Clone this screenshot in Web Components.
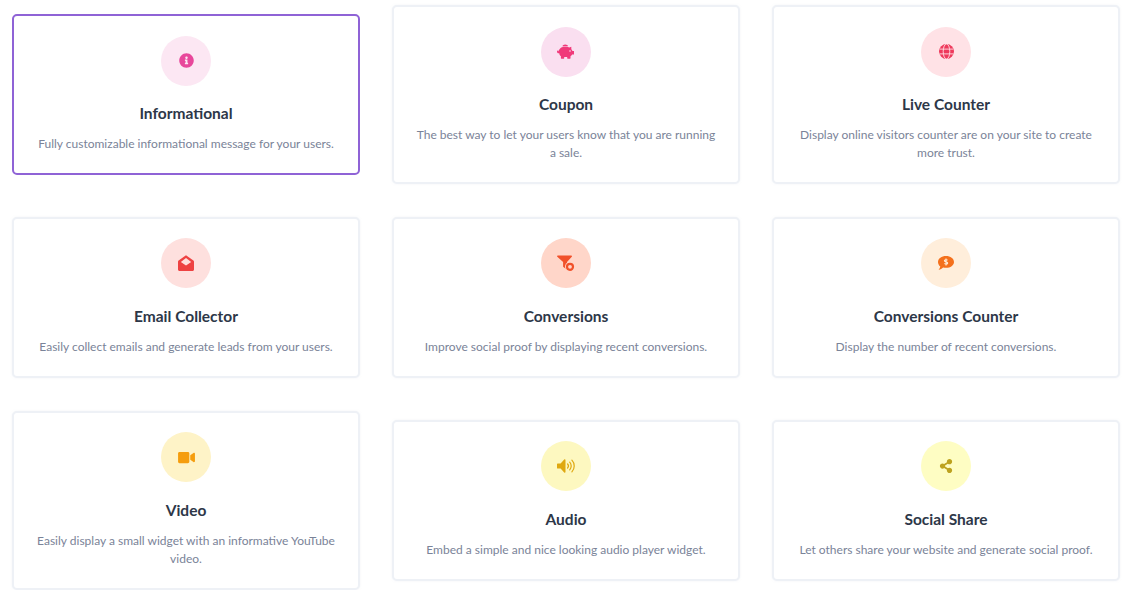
<!DOCTYPE html>
<html lang="en">
<head>
<meta charset="utf-8">
<title>Notifications</title>
<style>
    html, body { margin: 0; background: #fff; }
    body { font-family: "Lato", "Noto Sans", sans-serif; }
</style>
</head>
<body>

<template id="feature-card-template">
    <style>
        :host {
            display: block;
            box-sizing: border-box;
            background: #fff;
            border: 2px solid #eef1f6;
            border-radius: 5px;
            padding: 19.5px 22px 20px;
            text-align: center;
            box-shadow: 0 0 2px rgba(226, 232, 240, 0.5);
        }

        :host([selected]) {
            border-color: #8f63d6;
            box-shadow: none;
        }

        .badge {
            width: 50px;
            height: 50px;
            margin: 0 auto 15.5px;
            border-radius: 50%;
            display: flex;
            align-items: center;
            justify-content: center;
            background: var(--tint);
            color: var(--ink);
        }

        .title {
            font-size: 15.5px;
            font-weight: 700;
            line-height: 24px;
            color: #2d3748;
            margin-bottom: 10px;
        }

        .text {
            font-size: 12px;
            line-height: 18px;
            color: #7a8398;
        }
    </style>
    <div class="badge"><slot name="icon"></slot></div>
    <div class="title"></div>
    <div class="text"></div>
</template>

<template id="feature-grid-template">
    <style>
        :host {
            display: grid;
            grid-template-columns: repeat(3, 348px);
            column-gap: 32px;
            row-gap: 32.75px;
            align-items: center;
            padding: 5px 16px 0 12px;
        }
    </style>
    <slot></slot>
</template>

<feature-grid>
    <feature-card selected name="Informational" text="Fully customizable informational message for your users." tint="#fce7f3" ink="#e8479b">
        <svg slot="icon" width="15" height="15" viewBox="0 0 512 512" fill="currentColor" style="display:block"><path d="M256 8C119.043 8 8 119.083 8 256c0 136.997 111.043 248 248 248s248-111.003 248-248C504 119.083 392.957 8 256 8zm0 110c23.196 0 42 18.804 42 42s-18.804 42-42 42-42-18.804-42-42 18.804-42 42-42zm56 254c0 6.627-5.373 12-12 12h-88c-6.627 0-12-5.373-12-12v-24c0-6.627 5.373-12 12-12h12v-64h-12c-6.627 0-12-5.373-12-12v-24c0-6.627 5.373-12 12-12h64c6.627 0 12 5.373 12 12v100h12c6.627 0 12 5.373 12 12v24z"/></svg>
    </feature-card>
    <feature-card name="Coupon" text="The best way to let your users know that you are running a sale." tint="#fadff0" ink="#f0397a">
        <svg slot="icon" width="18" height="15" viewBox="0 0 18 15" fill="currentColor" style="display:block"><path d="M8.2 0.4c1.5 0 2.6 0.7 2.9 1.8H5.4C5.7 1.100 6.800 0.400 8.200 0.400z"/><path d="M9.500 2.700c1 0 2 0.300 2.800 0.900l2-0.800v2.500c0.500 0.500 0.900 1.100 1.100 1.700H17v3.400h-1.900c-0.400 0.700-0.900 1.300-1.600 1.800v2.100c0 0.300-0.200 0.500-0.500 0.500h-2.300c-0.300 0-0.500-0.200-0.500-0.500V13H7.200v1.300c0 0.300-0.200 0.500-0.500 0.500H4.400c-0.300 0-0.500-0.200-0.500-0.500v-2.200C2.900 11.700 2.300 10.500 2.300 9.200H1.500C0.700 9.200 0 8.500 0 7.700c0-0.700 0.500-1.300 1.200-1.400 0 0.500 0.100 0.900 0.500 1.200 0.200-2.600 2.600-4.800 5.500-4.800z"/><circle cx="13" cy="7" r="0.800" fill="#fadff0"/></svg>
    </feature-card>
    <feature-card name="Live Counter" text="Display online visitors counter are on your site to create more trust." tint="#ffe2e6" ink="#ee3a5c">
        <svg slot="icon" width="15" height="15" viewBox="0 0 15 15" style="display:block"><circle cx="7.500" cy="7.500" r="7.500" fill="currentColor"/><g fill="none" stroke="#ffe2e6" stroke-width="0.900"><ellipse cx="7.500" cy="7.500" rx="3.300" ry="7.500"/><path d="M0.500 5.100h14M0.500 9.900h14"/></g></svg>
    </feature-card>
    <feature-card name="Email Collector" text="Easily collect emails and generate leads from your users." tint="#fee0de" ink="#ee4242">
        <svg slot="icon" width="16" height="16" viewBox="0 0 16 16" fill="currentColor" style="display:block"><path d="M8 0.200 L15.400 5.500c0.400 0.300 0.600 0.700 0.600 1.200v7.800c0 0.800-0.700 1.500-1.500 1.500h-13C0.700 16 0 15.300 0 14.500V6.700c0-0.500 0.200-0.900 0.600-1.200z"/><path d="M8 3 L13.200 7 L8 10.600 L2.800 7z" fill="#fee0de"/></svg>
    </feature-card>
    <feature-card name="Conversions" text="Improve social proof by displaying recent conversions." tint="#ffd6c9" ink="#f1512a">
        <svg slot="icon" width="18" height="17" viewBox="0 0 18 17" style="display:block"><path fill="currentColor" d="M0.800 0.500h13.400c0.700 0 1 0.800 0.600 1.300L10 7v6.500c0 0.500-0.600 0.800-1 0.500L6.400 12c-0.200-0.100-0.300-0.300-0.300-0.500V7L0.300 1.800C-0.200 1.300 0.100 0.500 0.800 0.500z"/><circle cx="13" cy="11.800" r="5" fill="#ffd6c9"/><circle cx="13" cy="11.800" r="3" fill="none" stroke="currentColor" stroke-width="2.200"/></svg>
    </feature-card>
    <feature-card name="Conversions Counter" text="Display the number of recent conversions." tint="#ffeedb" ink="#f4701c">
        <svg slot="icon" width="16" height="14" viewBox="0 0 16 14" style="display:block"><path fill="currentColor" d="M8 0c4.400 0 8 2.600 8 5.900s-3.600 5.900-8 5.900c-1 0-2-.1-2.900-.4C4 12.500 2.400 13.600.6 13.800c.9-1 1.500-2 1.700-3.300C.9 9.400 0 7.800 0 5.900 0 2.600 3.600 0 8 0z"/><path fill="none" stroke="#ffeedb" stroke-width="1.100" d="M9.600 4.300C9.200 3.700 6.400 3.400 6.400 4.700s3.300 1 3.300 2.400-2.900 1.100-3.400.4M8 2.400v7"/></svg>
    </feature-card>
    <feature-card name="Video" text="Easily display a small widget with an informative YouTube video." tint="#fef3c7" ink="#f59d0e">
        <svg slot="icon" width="17" height="15" viewBox="0 0 576 512" fill="currentColor" style="display:block"><path d="M336.2 64H47.8C21.4 64 0 85.4 0 111.800v288.400C0 426.600 21.400 448 47.800 448h288.400c26.400 0 47.800-21.400 47.800-47.800V111.800c0-26.400-21.400-47.800-47.800-47.800zm189.400 37.700L416 177.300v157.400l109.600 75.500c21.200 14.600 50.400-.3 50.400-25.800V127.500c0-25.400-29.100-40.400-50.400-25.800z"/></svg>
    </feature-card>
    <feature-card name="Audio" text="Embed a simple and nice looking audio player widget." tint="#fdf8c0" ink="#dfa810">
        <svg slot="icon" width="19" height="14" viewBox="0 0 19 14" style="display:block"><path fill="currentColor" d="M0 5.100C0 4.700.3 4.400.7 4.400h2.900L7.200.5C7.700 0 8.500.3 8.500 1v12c0 .7-.8 1-1.300.5L3.600 9.600H.7c-.4 0-.7-.3-.7-.7z"/><path fill="none" stroke="currentColor" stroke-width="1.200" stroke-linecap="round" d="M10.600 5c1 1.100 1 2.900 0 4M12.700 3.200c2 2.100 2 5.500 0 7.600M14.900 1.200c3.100 3.300 3.100 8.300 0 11.600"/></svg>
    </feature-card>
    <feature-card name="Social Share" text="Let others share your website and generate social proof." tint="#fefdc3" ink="#bda21f">
        <svg slot="icon" width="14" height="14" viewBox="0 0 448 512" fill="currentColor" style="display:block"><path d="M352 320c-22.608 0-43.387 7.819-59.79 20.895l-102.486-64.054a96.551 96.551 0 0 0 0-41.683l102.486-64.054C308.613 184.181 329.392 192 352 192c53.019 0 96-42.981 96-96S405.019 0 352 0s-96 42.981-96 96c0 7.158.79 14.130 2.276 20.841L155.790 180.895C139.387 167.819 118.608 160 96 160c-53.019 0-96 42.981-96 96s42.981 96 96 96c22.608 0 43.387-7.819 59.790-20.895l102.486 64.054A96.301 96.301 0 0 0 256 416c0 53.019 42.981 96 96 96s96-42.981 96-96-42.981-96-96-96z"/></svg>
    </feature-card>
</feature-grid>

<script>
    class FeatureGrid extends HTMLElement {
        constructor() {
            super();
            const template = document.getElementById('feature-grid-template');
            this.attachShadow({ mode: 'open' });
            this.shadowRoot.appendChild(template.content.cloneNode(true));
        }
    }

    class FeatureCard extends HTMLElement {
        constructor() {
            super();
            const template = document.getElementById('feature-card-template');
            this.attachShadow({ mode: 'open' });
            this.shadowRoot.appendChild(template.content.cloneNode(true));
        }

        connectedCallback() {
            this.shadowRoot.querySelector('.title').textContent = this.getAttribute('name');
            this.shadowRoot.querySelector('.text').textContent = this.getAttribute('text');
            this.style.setProperty('--tint', this.getAttribute('tint'));
            this.style.setProperty('--ink', this.getAttribute('ink'));
        }
    }

    customElements.define('feature-grid', FeatureGrid);
    customElements.define('feature-card', FeatureCard);
</script>
</body>
</html>
